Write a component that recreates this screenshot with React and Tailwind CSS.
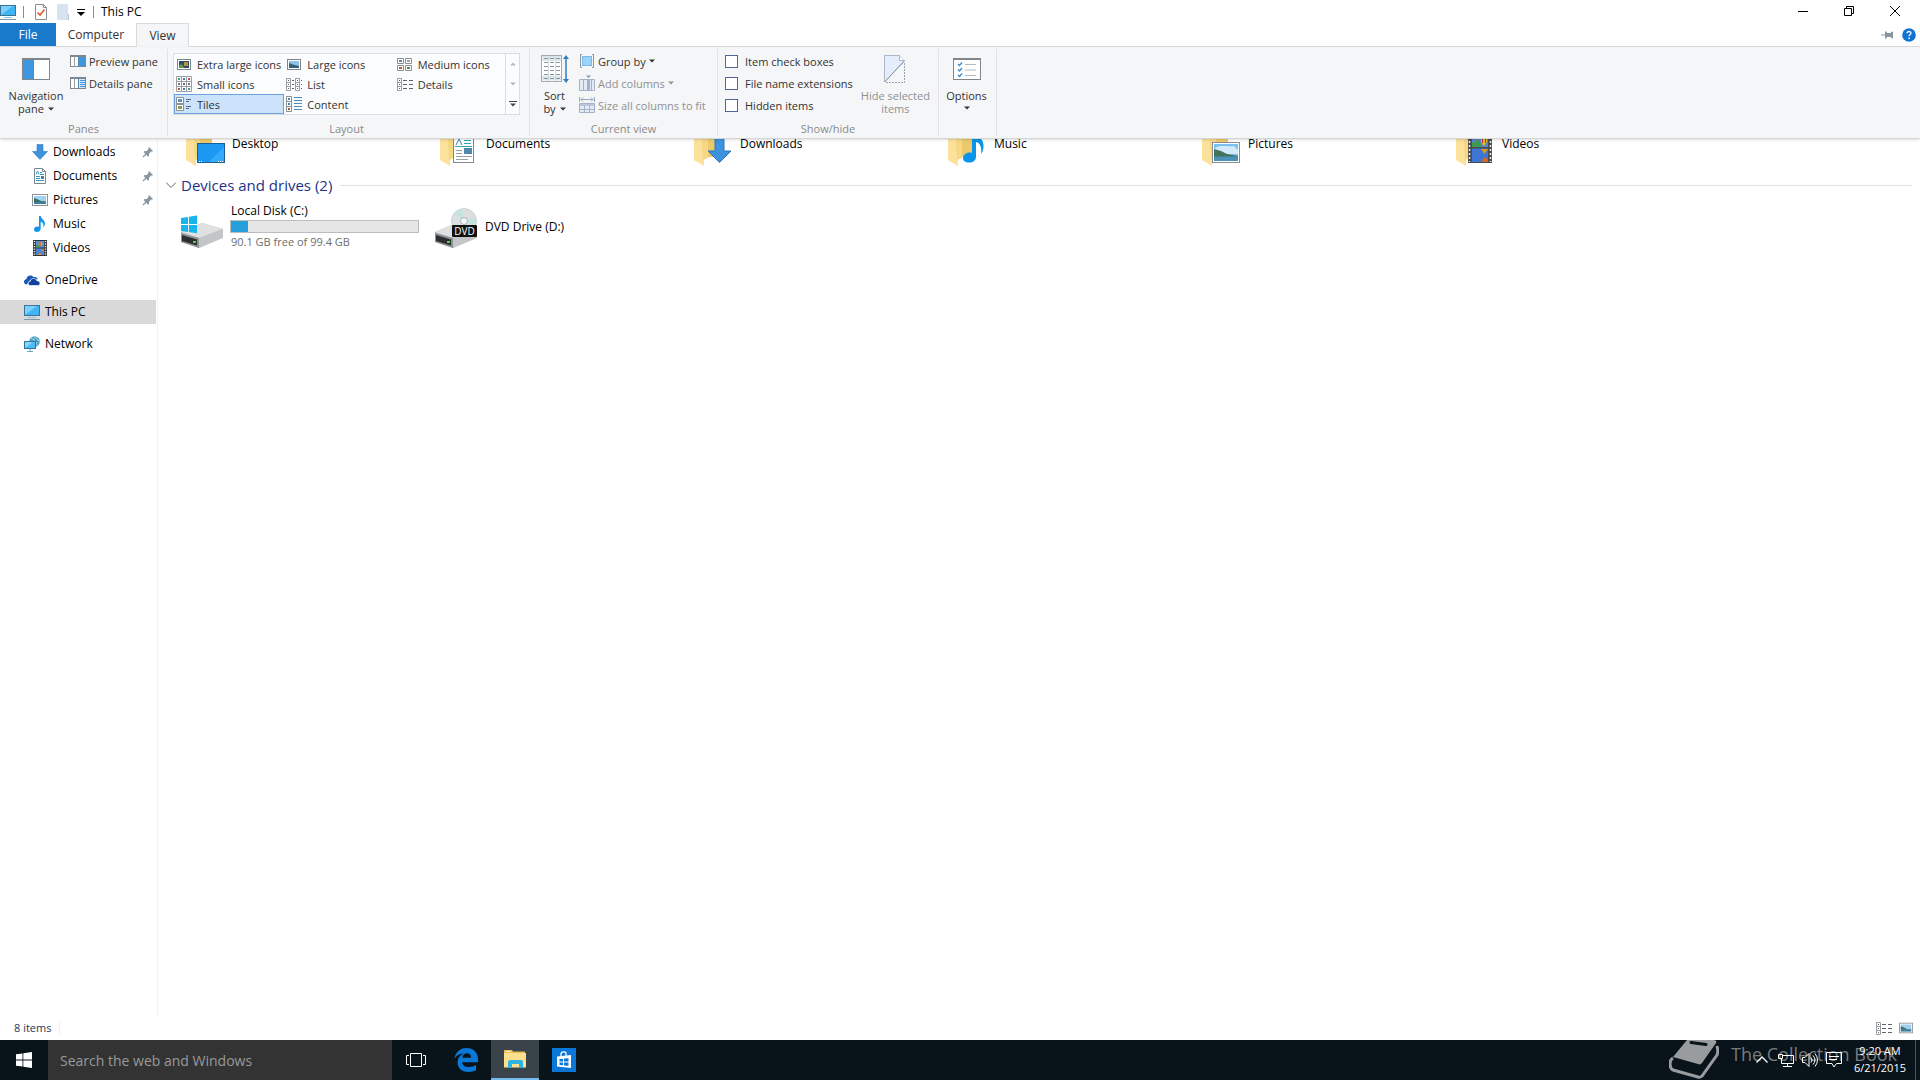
import { useState } from "react";

function Monitor({ className }) {
  return (
    <svg className={className} viewBox="0 0 16 16" aria-hidden="true">
      <rect x="0.5" y="1.5" width="15" height="10" fill="#3fb4f4" stroke="#3b7297" />
      <path d="M1 11V2h12z" fill="#7dd0fb" />
      <path d="M4 13.5h8" stroke="#8fc3df" />
      <path d="M0 15.5h16" stroke="#7c97a8" />
    </svg>
  );
}

function DownArrow({ className }) {
  return (
    <svg className={className} viewBox="0 0 16 16" aria-hidden="true">
      <path d="M5 .5h6v7h4.500L8 15.500.5 7.500H5z" fill="#3f92dd" stroke="#2b76bf" strokeWidth=".6" />
    </svg>
  );
}

function DocIcon({ className }) {
  return (
    <svg className={className} viewBox="0 0 16 16" aria-hidden="true">
      <path d="M2.500.5h8l3 3v12h-11z" fill="#fff" stroke="#7b8791" />
      <path d="M10.500.5v3h3" fill="none" stroke="#7b8791" />
      <path d="M4 6.500l1.500-3.500L7 6.500M8 4.500h2M8 6.500h4M4 8.500h4M4 10.500h4M4 12.500h8" fill="none" stroke="#2f9ac4" />
      <rect x="9" y="8" width="3" height="3" fill="#4b7f97" />
    </svg>
  );
}

function PictureIcon({ className }) {
  return (
    <svg className={className} viewBox="0 0 16 12" aria-hidden="true">
      <rect x="0.5" y="0.5" width="15" height="11" fill="#fff" stroke="#8d9499" />
      <rect x="2" y="2" width="12" height="8" fill="#9fd2f2" />
      <path d="M2 4l3 1 4 2 5 .5V8H2z" fill="#3b6d63" />
      <path d="M2 8h12v2H2z" fill="#3f7fa6" />
    </svg>
  );
}

function NoteIcon({ className }) {
  return (
    <svg className={className} viewBox="0 0 16 16" aria-hidden="true">
      <path d="M7 0h1.700c.4 3 4.600 4 4.300 8-.1 1.500-1 2.500-1.800 3.300.9-3-.2-4.800-2.500-5.500v7c0 1.800-1.500 3.200-3.700 3.200C3.500 16 2 15.200 2 13.500s1.600-3 3.400-3c.6 0 1.100.1 1.600.3z" fill="#1695ec" />
    </svg>
  );
}

function FilmIcon({ className }) {
  return (
    <svg className={className} viewBox="0 0 16 16" aria-hidden="true">
      <rect x="1" y="0" width="14" height="16" fill="#33363b" />
      <path d="M2.500 1v14M13.500 1v14" stroke="#e8e8e8" strokeWidth="1.500" strokeDasharray="1.300 1.200" />
      <rect x="4" y="1" width="8" height="6.500" fill="#5b8fcb" />
      <rect x="4" y="8.500" width="8" height="6.500" fill="#4b86d8" />
      <path d="M4 5l3 0 1 2.500H4z" fill="#3f9a52" />
      <circle cx="8.500" cy="4" r="2" fill="#e0b23a" />
      <path d="M8 2v4" stroke="#c9304e" />
      <path d="M9 9.500h3v1.500H9zM6 13.500h4V15H6z" fill="#d98b2f" />
    </svg>
  );
}

function CloudIcon({ className }) {
  return (
    <svg className={className} viewBox="0 0 16 16" aria-hidden="true">
      <path d="M3 12.500C1 12.500 0 11.200 0 9.800 0 8.300 1 7.300 2.300 7.200 2.600 5 4.200 3.500 6.300 3.500c1.500 0 2.600.6 3.400 1.700 1.700-.5 3.500.4 4 2.200l-4-.2-4 1.300-1.700 2z" fill="#1a56b4" />
      <path d="M6.500 13.500c-1.300 0-2.300-.9-2.300-2.100s.9-2 2-2.100C6.500 7.400 8 6.400 9.600 6.400c1.500 0 2.700.9 3.200 2.300 1.900-.1 3.200 1 3.200 2.500 0 1.400-1 2.300-2.400 2.300z" fill="#0d419b" stroke="#fff" strokeWidth=".7" />
    </svg>
  );
}

function NetworkIcon({ className }) {
  return (
    <svg className={className} viewBox="0 0 16 16" aria-hidden="true">
      <circle cx="10.500" cy="5.500" r="5.300" fill="#4a9fc5" />
      <path d="M7 2.500c2 0 2 2 4 1.500M10 .5c1 2 4 2 5 5M12 6c0 2 1 3 2 3" stroke="#b5e0ef" fill="none" />
      <rect x="0.5" y="5.500" width="11" height="7" fill="#4cbcf4" stroke="#2e739c" />
      <path d="M1 12V6h8z" fill="#86d6fb" />
      <path d="M3 15.500h6M6 13v2" stroke="#6fa8c6" />
    </svg>
  );
}

function PinIcon() {
  return (
    <svg className="h-3 w-3" viewBox="0 0 12 12" aria-hidden="true">
      <path d="M7 1l4 4-1 .8-1-.2L7 8l0 2-1 .7L1.600 6 2.500 5l2 .2L6.500 3l-.2-1.200z" fill="#8b959e" />
      <path d="M4 8l-3 3" stroke="#8b959e" strokeWidth="1.200" />
    </svg>
  );
}

function Caret({ className }) {
  return (
    <svg className={className} viewBox="0 0 6 4" aria-hidden="true">
      <path d="M0 .5h6L3 3.500z" fill="currentColor" />
    </svg>
  );
}

function LayoutIcon({ kind }) {
  const cls = "h-4 w-4 shrink-0";
  if (kind === "xl" || kind === "lg") {
    return (
      <svg className={cls} viewBox="0 0 16 16" aria-hidden="true">
        <rect x="1.500" y="3.500" width="13" height="10" fill="#fff" stroke="#7c858c" />
        <rect x="3" y="5" width="10" height="7" fill={kind === "xl" ? "#33496a" : "#8fc3e2"} />
        {kind === "xl" ? (
          <>
            <path d="M3 10c2-3 4-2 5 2H3z" fill="#63934f" />
            <rect x="8" y="6" width="4" height="4" fill="#b2963a" />
          </>
        ) : (
          <path d="M3 7l4 1.500 6 1.500v2H3z" fill="#33647a" />
        )}
      </svg>
    );
  }
  if (kind === "md") {
    return (
      <svg className={cls} viewBox="0 0 16 16" aria-hidden="true">
        <path d="M.5 2.500h6v5h-6zM8.500 2.500h6v5h-6zM.5 9.500h6v5h-6zM8.500 9.500h6v5h-6z" fill="#fff" stroke="#8b8f93" />
        <path d="M2 4h3v2H2z" fill="#5b8fb0" />
        <path d="M10 4h3v2h-3z" fill="#8fa9b8" />
        <path d="M2 11h3v2H2z" fill="#bb5a3a" />
        <path d="M10 11h3v2h-3z" fill="#6f7d3f" />
      </svg>
    );
  }
  if (kind === "sm") {
    return (
      <svg className={cls} viewBox="0 0 16 16" aria-hidden="true">
        <path d="M.5.5h15v15H.5zM5.500.5v15M10.500.5v15M.5 5.500h15M.5 10.500h15" fill="#fff" stroke="#9b9ea1" />
        <path d="M2 2h2v2H2zM12 12h2v2h-2z" fill="#45a06c" />
        <path d="M7 2h2v2H7zM7 12h2v2H7z" fill="#4476c4" />
        <path d="M12 2h2v2h-2zM2 12h2v2H2z" fill="#b5523e" />
        <path d="M2 7h2v2H2zM7 7h2v2H7zM12 7h2v2h-2z" fill="#6d7176" />
      </svg>
    );
  }
  if (kind === "list") {
    return (
      <svg className={cls} viewBox="0 0 16 16" aria-hidden="true">
        <path d="M.5 2.500h4v12h-4zM9.500 2.500h4v12h-4zM.5 6.500h4M.5 10.500h4M9.500 6.500h4M9.500 10.500h4" fill="#fff" stroke="#9b9ea1" />
        <path d="M2 4.500h1M2 8.500h1M2 12.500h1M11 4.500h1M11 8.500h1M11 12.500h1M6 4.500h2M6 8.500h2M6 12.500h2M15 4.500h1M15 8.500h1M15 12.500h1" stroke="#5d6369" />
      </svg>
    );
  }
  if (kind === "details") {
    return (
      <svg className={cls} viewBox="0 0 16 16" aria-hidden="true">
        <path d="M.5 2.500h4v12h-4zM.5 6.500h4M.5 10.500h4" fill="#fff" stroke="#9b9ea1" />
        <path d="M2 4.500h1M2 8.500h1M2 12.500h1M6 4.500h4M6 8.500h4M6 12.500h4M12 4.500h4M12 8.500h4M12 12.500h4" stroke="#5d6369" />
      </svg>
    );
  }
  if (kind === "tiles") {
    return (
      <svg className={cls} viewBox="0 0 16 16" aria-hidden="true">
        <path d="M.5 1.500h7v6h-7zM.5 8.500h7v6h-7z" fill="#fff" stroke="#8b8f93" />
        <path d="M2 3h4v3H2z" fill="#5d92ba" />
        <path d="M2 10h4v3H2z" fill="#87a04d" />
        <path d="M10 3.500h5M10 5.500h3M10 10.500h5M10 12.500h3" stroke="#5d6a86" />
      </svg>
    );
  }
  return (
    <svg className={cls} viewBox="0 0 16 16" aria-hidden="true">
      <path d="M.5.5h5v15h-5zM.5 5.500h5M.5 10.500h5" fill="#fff" stroke="#8b8f93" />
      <path d="M2 2h2v2H2zM2 7h2v2H2z" fill="#4a83a8" />
      <path d="M2 12h2v2H2z" fill="#a85a45" />
      <path d="M8 1.500h8M8 4.500h8M8 7.500h8M8 10.500h8M8 13.500h8" stroke="#4c87bd" />
    </svg>
  );
}

function PaneIcon({ details }) {
  return (
    <svg className="h-3 w-4" viewBox="0 0 16 12" aria-hidden="true">
      <rect x="0.500" y="0.500" width="15" height="11" fill="#fff" stroke="#7f868c" />
      <path d="M0 1h16" stroke="#7f868c" strokeWidth="2" />
      <path d="M4.500 1v11" stroke="#9aa0a5" />
      <rect x="9" y="2" width="6" height="9" fill={details ? "#d5eafa" : "#3f97df"} />
      <path d="M8.500 1v11" stroke="#5a87ac" />
      {details && <path d="M10 3.500h5M10 5.500h5M10 7.500h5M10 9.500h5" stroke="#3f97df" />}
    </svg>
  );
}

/* ---------- folder tiles ---------- */

function FolderIcon({ kind }) {
  return (
    <svg className="h-12 w-12 shrink-0" viewBox="0 0 48 48" aria-hidden="true">
      <path d="M8 4h20v34H8z" fill="#ecc96b" />
      <path d="M2 2h6l8 5v30l-4 3v7L2 41z" fill="#fbe19a" />
      <path d="M9 8l7-2v33l-5 2z" fill="#f6d784" />
      {kind === "desktop" && (
        <>
          <rect x="13.500" y="24.500" width="27" height="19" fill="#1c98f3" stroke="#1d5f95" />
          <path d="M25 43L40 28v15z" fill="#35a9fa" />
          <path d="M15 42.500h3M34 42.500h5" stroke="#fff" strokeDasharray="1 1" />
        </>
      )}
      {kind === "documents" && (
        <>
          <rect x="15.500" y="14.500" width="20" height="29" fill="#fff" stroke="#7e8990" />
          <path d="M18 26l3-6 3 6" fill="none" stroke="#2a86b5" />
          <path d="M26 21.500h7M26 24.500h7M17 27.500h17" stroke="#35a2c6" />
          <path d="M18 31.500h6M18 34.500h6M18 37.500h16M18 40.500h12" stroke="#9aa1a6" />
          <rect x="26" y="29" width="8" height="6" fill="#4e88ab" />
        </>
      )}
      {kind === "downloads" && <path d="M23 12h9v20h7L27.500 43.500 16 32h7z" fill="#3f92dd" stroke="#2b76bf" />}
      {kind === "music" && (
        <path d="M26 12h4c1 6 8 7 7.500 16-.2 3-1 5-2.500 7 1-7-1-11-5-12v15c0 3.500-3 5.500-7 5.500-3.500 0-6-1.500-6-4.500s3-5.500 6.500-5.500c1 0 1.800.1 2.500.5z" fill="#0a95ea" />
      )}
      {kind === "pictures" && (
        <>
          <rect x="12.500" y="23.500" width="27" height="20" fill="#fff" stroke="#878f95" />
          <rect x="14" y="25" width="24" height="17" fill="#79bff0" />
          <path d="M17 28c4-2 9 0 17-1l4 4v4H14v-5z" fill="#d3eafa" />
          <path d="M14 30l7 2 6 3 11 2v1H14z" fill="#41745a" />
          <path d="M14 37.500h24V42H14z" fill="#4b91b8" />
        </>
      )}
      {kind === "videos" && (
        <>
          <rect x="14" y="14" width="24" height="30" fill="#4a4d50" />
          <path d="M15.500 14v29M36.500 14v29" stroke="#eceff1" strokeWidth="1.500" strokeDasharray="2 2" />
          <path d="M18 14h16v14H18z" fill="#5b86c5" />
          <path d="M18 24l7-3 3 7H18z" fill="#3f9a4e" />
          <path d="M18 29.500h16V43H18z" fill="#3e74d3" />
          <path d="M27 17h6v6l-3 4-3-4z" fill="#e7bd27" />
          <path d="M28 17h1v7h-1zM31 17h1v7h-1z" fill="#c0283f" />
          <path d="M27 30h7l-3.500 5z" fill="#d69a24" />
          <path d="M28 43c0-6 6-6 6 0z" fill="#cf6a2b" />
          <path d="M19 15l4 0-2 4z" fill="#b33a7c" />
        </>
      )}
    </svg>
  );
}

function DriveBody() {
  return (
    <>
      <path d="M3 29l21-9 21 6v8L21 45 3 39z" fill="#b9bbbd" />
      <path d="M3 29l21-9 21 6-24 9z" fill="#dfe0e1" />
      <path d="M21 35l24-9v9L21 45z" fill="#c3c5c7" />
      <path d="M3 30l18 5v10L3 39z" fill="#8f9193" />
      <path d="M4 32l15 4.500v6L4 38z" fill="#2c2f31" />
      <rect x="15" y="38" width="3" height="2" fill="#4fd05a" />
    </>
  );
}

function LocalDiskIcon() {
  return (
    <svg className="h-12 w-12 shrink-0" viewBox="0 0 48 48" aria-hidden="true">
      <DriveBody />
      <path d="M3 15l7-1v7H3zM11 13.800l8-1.200V21h-8zM3 22h7v7l-7-1zM11 22h8v8.200l-8-1.200z" fill="#16b5ea" />
    </svg>
  );
}

function DvdIcon() {
  return (
    <svg className="h-12 w-12 shrink-0" viewBox="0 0 48 48" aria-hidden="true">
      <DriveBody />
      <circle cx="32" cy="18" r="12.500" fill="#dcdfe0" stroke="#b9bdc0" strokeWidth=".6" />
      <path d="M32 18L22 10.500A12.500 12.500 0 0 1 30 5.700zM32 18l11.500 5A12.500 12.500 0 0 0 44 15z" fill="#c3e3dd" />
      <circle cx="32" cy="18" r="3.500" fill="#f5f6f6" stroke="#afb4b6" />
      <rect x="20" y="22" width="25" height="12" rx="1" fill="#111" />
      <text x="32.500" y="31.500" textAnchor="middle" fontSize="10" fill="#fff" fontFamily="Open Sans, sans-serif">
        DVD
      </text>
    </svg>
  );
}

const folders = [
  { name: "Desktop", kind: "desktop" },
  { name: "Documents", kind: "documents" },
  { name: "Downloads", kind: "downloads" },
  { name: "Music", kind: "music" },
  { name: "Pictures", kind: "pictures" },
  { name: "Videos", kind: "videos" },
];

const quickAccess = [
  { name: "Downloads", Icon: DownArrow, pinned: true },
  { name: "Documents", Icon: DocIcon, pinned: true },
  { name: "Pictures", Icon: PictureIcon, pinned: true },
  { name: "Music", Icon: NoteIcon },
  { name: "Videos", Icon: FilmIcon },
];

const layouts = [
  { name: "Extra large icons", kind: "xl" },
  { name: "Large icons", kind: "lg" },
  { name: "Medium icons", kind: "md" },
  { name: "Small icons", kind: "sm" },
  { name: "List", kind: "list" },
  { name: "Details", kind: "details" },
  { name: "Tiles", kind: "tiles" },
  { name: "Content", kind: "content" },
];

function TitleBar() {
  return (
    <header className="flex h-[23px] shrink-0 items-center bg-white">
      <Monitor className="h-4 w-4" />
      <span className="ml-[7px] h-3 w-px bg-[#8c8c8c]" />
      <button aria-label="Properties" className="ml-[11px]">
        <svg className="h-4 w-3" viewBox="0 0 12 16">
          <path d="M.5.5h8l3 3v12H.5z" fill="#fff" stroke="#8b8f93" />
          <path d="M8.500.5v3h3" fill="none" stroke="#8b8f93" />
          <path d="M2.500 8.500L5 11l4.500-5.500" fill="none" stroke="#e2572b" strokeWidth="1.600" />
        </svg>
      </button>
      <button aria-label="New folder" className="ml-[10px]">
        <svg className="h-4 w-3" viewBox="0 0 12 16">
          <path d="M0 0h11v10l1 1v5H0z" fill="#d8e2f1" />
          <path d="M10 10.500h1.500v5H9.500" fill="none" stroke="#b9c7dc" />
        </svg>
      </button>
      <button aria-label="Customize Quick Access Toolbar" className="ml-2">
        <svg className="h-2 w-2" viewBox="0 0 8 8">
          <path d="M0 1.500h8" stroke="#000" />
          <path d="M0 4h8L4 8z" fill="#000" />
        </svg>
      </button>
      <span className="ml-2 h-3 w-px bg-[#8c8c8c]" />
      <h1 className="ml-[7px] text-xs">This PC</h1>
      <div className="ml-auto flex items-center pr-[2px] pb-[2px]">
        <button aria-label="Minimize" className="flex w-[46px] justify-center">
          <svg className="h-[10px] w-[10px]" viewBox="0 0 10 10">
            <path d="M0 5.500h10" stroke="#000" />
          </svg>
        </button>
        <button aria-label="Restore" className="flex w-[46px] justify-center">
          <svg className="h-[10px] w-[10px]" viewBox="0 0 10 10">
            <path d="M.5 2.500h7v7h-7zM2.500 2V.5h7v7H8" fill="none" stroke="#000" />
          </svg>
        </button>
        <button aria-label="Close" className="flex w-[46px] justify-center">
          <svg className="h-[10px] w-[10px]" viewBox="0 0 10 10">
            <path d="M0 0l10 10M10 0L0 10" stroke="#000" />
          </svg>
        </button>
      </div>
    </header>
  );
}

function Tabs() {
  return (
    <nav className="flex h-6 shrink-0 items-stretch border-b border-[#dadbdc] bg-white text-xs text-[#333]">
      <button className="w-14 bg-[#1979ca] text-white">File</button>
      <button className="w-20">Computer</button>
      <button className="-mb-px w-[53px] border border-b-0 border-[#dadbdc] bg-[#f5f6f7]">View</button>
      <div className="ml-auto flex items-center gap-[9px] pr-1">
        <button aria-label="Minimize the Ribbon">
          <svg className="h-2 w-3" viewBox="0 0 12 8">
            <path d="M0 4h4" stroke="#8b959e" />
            <path d="M4 .5h1.500l.5 1.500h4V.8h2v6.400h-2V6H6l-.5 1.500H4z" fill="#8b959e" />
          </svg>
        </button>
        <button aria-label="Help">
          <svg className="h-[14px] w-[14px]" viewBox="0 0 14 14">
            <circle cx="7" cy="7" r="6.800" fill="#0f74d1" />
            <path d="M5 5.300C5 2.800 9.200 3 9 5.300c-.1 1.300-1.900 1.400-1.900 3" fill="none" stroke="#fff" strokeWidth="1.300" />
            <circle cx="7.100" cy="10.300" r=".9" fill="#fff" />
          </svg>
        </button>
      </div>
    </nav>
  );
}

function Group({ label, className, children }) {
  return (
    <section className={`flex flex-col border-r border-[#e2e3e4] ${className}`}>
      <div className="flex flex-1">{children}</div>
      <h2 className="h-[15px] text-center text-[11px] leading-4 text-[#8a8a8a]">{label}</h2>
    </section>
  );
}

function Ribbon() {
  const [view, setView] = useState("Tiles");
  const [shown, setShown] = useState({});

  return (
    <div className="z-10 flex h-[92px] shrink-0 border-b border-[#d5d6d7] bg-[#f5f6f7] py-[2px] text-[11px] leading-[13px] text-[#333] shadow-sm">
      <Group label="Panes" className="w-[168px]">
        <button className="flex w-[70px] flex-col items-center pt-[9px] pl-[2px]">
          <svg className="h-[22px] w-7" viewBox="0 0 28 22" aria-hidden="true">
            <rect x="0.500" y="0.500" width="27" height="21" fill="#fff" stroke="#7f868c" />
            <path d="M0 1h28" stroke="#7f868c" strokeWidth="2" />
            <rect x="1" y="2" width="10" height="19" fill="#3f97df" />
            <path d="M11.500 2v19" stroke="#5a87ac" />
          </svg>
          <span className="mt-[9px]">Navigation</span>
          <span className="flex items-center gap-1">
            pane <Caret className="h-1 w-[6px]" />
          </span>
        </button>
        <div className="flex flex-col pt-px">
          <button className="flex h-[22px] items-center gap-[3px]">
            <PaneIcon /> Preview pane
          </button>
          <button className="flex h-[22px] items-center gap-[3px]">
            <PaneIcon details /> Details pane
          </button>
        </div>
      </Group>

      <Group label="Layout" className="w-[362px] pr-[9px] pl-[5px]">
        <div className="mt-1 flex h-[62px] flex-1 border border-[#dcdddf] bg-[#fbfcfd]">
          <div className="grid flex-1 grid-cols-3 grid-rows-3">
            {layouts.map((l) => (
              <button
                key={l.name}
                onClick={() => setView(l.name)}
                className={
                  view === l.name
                    ? "flex items-center gap-[5px] border border-[#6ba1d8] bg-[#cce3fc] pl-px whitespace-nowrap"
                    : "flex items-center gap-[5px] pl-[2px] whitespace-nowrap"
                }
              >
                <LayoutIcon kind={l.kind} />
                {l.name}
              </button>
            ))}
          </div>
          <div className="flex w-[14px] flex-col border-l border-[#dcdddf] text-[#b5b8bb]">
            <button aria-label="Scroll up" className="flex flex-1 items-center justify-center">
              <Caret className="h-1 w-[6px] rotate-180" />
            </button>
            <button aria-label="Scroll down" className="flex flex-1 items-center justify-center">
              <Caret className="h-1 w-[6px]" />
            </button>
            <button aria-label="More layouts" className="flex flex-1 flex-col items-center justify-center gap-px text-[#444]">
              <span className="h-px w-2 bg-[#444]" />
              <Caret className="h-1 w-2" />
            </button>
          </div>
        </div>
      </Group>

      <Group label="Current view" className="w-[188px]">
        <button className="flex w-[49px] flex-col items-center pt-[6px]">
          <svg className="h-7 w-7" viewBox="0 0 28 28" aria-hidden="true">
            <rect x="0.500" y="0.500" width="20" height="26" fill="#fff" stroke="#a7abad" />
            <path d="M1 3.500h19M1 23h19" stroke="#dbe6ec" strokeWidth="5" />
            <path d="M3 3.500h16M3 7.500h16M3 11.500h16M3 15.500h16M3 19.500h16M3 23.500h16" stroke="#8c979d" strokeDasharray="4 2" />
            <path d="M7.500 1v25M14.500 1v25" stroke="#d8dcde" />
            <path d="M25 3v22" stroke="#2f7fc2" strokeWidth="1.500" />
            <path d="M22 4l3-4 3 4zM22 24l3 4 3-4z" fill="#2f7fc2" />
          </svg>
          <span className="mt-[6px]">Sort</span>
          <span className="flex items-center gap-1">
            by <Caret className="h-1 w-[6px]" />
          </span>
        </button>
        <div className="flex flex-col pt-px whitespace-nowrap">
          <button className="flex h-[22px] items-center gap-[3px]">
            <svg className="h-4 w-4" viewBox="0 0 16 16" aria-hidden="true">
              <path d="M3 1.500H1.500v13H3M13 1.500h1.500v13H13" fill="none" stroke="#8b959e" />
              <rect x="3.500" y="3.500" width="9" height="9" fill="#9bd5fa" stroke="#79b9e3" />
            </svg>
            Group by <Caret className="h-1 w-[6px]" />
          </button>
          <button disabled className="flex h-[22px] items-center gap-[3px] text-[#8f9193]">
            <svg className="h-4 w-4" viewBox="0 0 16 16" aria-hidden="true">
              <path d="M.5 4.500h15v11H.5z" fill="#e4ebf5" stroke="#a3b1c9" />
              <path d="M4.500 4v11M12.500 4v11" stroke="#a3b1c9" />
              <path d="M8 4h3v11H8z" fill="#a3b1c9" />
              <path d="M7 .5h5L9.500 3z" fill="#8796b4" />
            </svg>
            Add columns <Caret className="h-1 w-[6px]" />
          </button>
          <button disabled className="flex h-[22px] items-center gap-[3px] text-[#8f9193]">
            <svg className="h-4 w-4" viewBox="0 0 16 16" aria-hidden="true">
              <path d="M.5 0v5M15.500 0v5M2 2.500h12M4 .5l-2 2 2 2M12 .5l2 2-2 2" fill="none" stroke="#9aa7bd" />
              <path d="M.5 6.500h15v9H.5z" fill="#e4ebf5" stroke="#a3b1c9" />
              <path d="M1 8h14" stroke="#b9c7dd" strokeWidth="2" />
              <path d="M5.500 9v6M10.500 9v6M1 12.500h14" stroke="#a3b1c9" />
            </svg>
            Size all columns to fit
          </button>
        </div>
      </Group>

      <Group label="Show/hide" className="w-[221px]">
        <div className="flex flex-col pt-px pl-[7px] whitespace-nowrap">
          {["Item check boxes", "File name extensions", "Hidden items"].map((name) => (
            <label key={name} className="flex h-[22px] items-center gap-[7px]">
              <input
                type="checkbox"
                checked={!!shown[name]}
                onChange={(e) => setShown({ ...shown, [name]: e.target.checked })}
                className="h-[13px] w-[13px] appearance-none border border-[#4f6699] bg-white checked:bg-[#4f6699]"
              />
              {name}
            </label>
          ))}
        </div>
        <button disabled className="ml-auto flex w-[87px] flex-col items-center pt-[6px] text-[#8f9193]">
          <svg className="h-7 w-[22px]" viewBox="0 0 22 28" aria-hidden="true">
            <path d="M.5 27V.5h15l5 5z" fill="#e4edf9" stroke="#aab6c9" />
            <path d="M15.500.5v5h5" fill="#fff" stroke="#aab6c9" />
            <path d="M20.500 6L.5 27" stroke="#8a97ab" />
            <path d="M20.500 8v19.500H1" fill="none" stroke="#9aa4b2" strokeDasharray="2 1" />
          </svg>
          <span className="mt-[6px] whitespace-nowrap">Hide selected</span>
          <span>items</span>
        </button>
      </Group>

      <Group label="" className="w-[58px]">
        <button className="flex w-[55px] flex-col items-center pt-[9px]">
          <svg className="h-[22px] w-7" viewBox="0 0 28 22" aria-hidden="true">
            <rect x="0.500" y="0.500" width="27" height="21" fill="#fff" stroke="#7f868c" />
            <path d="M0 1h28" stroke="#7f868c" strokeWidth="2" />
            <path d="M5 6l1.500 1.500L9 4.500M5 11.500L6.500 13 9 10M5 17l1.500 1.500L9 15.500" fill="none" stroke="#3f8fd2" strokeWidth="1.500" />
            <path d="M12 6.500h11M12 12h11M12 17.500h11" stroke="#b4b8bb" />
          </svg>
          <span className="mt-[9px]">Options</span>
          <Caret className="mt-1 h-1 w-[6px]" />
        </button>
      </Group>
    </div>
  );
}

function Sidebar() {
  return (
    <aside className="w-[158px] shrink-0 border-r border-[#f2f2f2] pr-px text-xs">
      <ul className="pt-px">
        {quickAccess.map(({ name, Icon, pinned }) => (
          <li key={name}>
            <a href="#" className="flex h-6 items-center pr-[2px] pl-8">
              <Icon className="mr-[5px] h-4 w-4" />
              {name}
              {pinned && (
                <span className="ml-auto">
                  <PinIcon />
                </span>
              )}
            </a>
          </li>
        ))}
      </ul>
      <ul className="mt-2 flex flex-col gap-2">
        <li>
          <a href="#" className="flex h-6 items-center gap-[5px] pl-6">
            <CloudIcon className="h-4 w-4" /> OneDrive
          </a>
        </li>
        <li>
          <a href="#" className="flex h-6 items-center gap-[5px] bg-[#d9d9d9] pl-6">
            <Monitor className="h-4 w-4" /> This PC
          </a>
        </li>
        <li>
          <a href="#" className="flex h-6 items-center gap-[5px] pl-6">
            <NetworkIcon className="h-4 w-4" /> Network
          </a>
        </li>
      </ul>
    </aside>
  );
}

function Content() {
  const used = 99.4 - 90.1;

  return (
    <main className="min-w-0 flex-1 overflow-hidden text-xs">
      <div className="-mt-5 flex flex-wrap pl-[26px]">
        {folders.map((f) => (
          <a href="#" key={f.name} className="flex w-[254px] items-center leading-4">
            <FolderIcon kind={f.kind} />
            <span className="pt-[2px]">{f.name}</span>
          </a>
        ))}
      </div>
      <div className="mt-2 flex items-center pr-2 pl-2">
        <button aria-label="Collapse group">
          <svg className="h-[6px] w-[10px]" viewBox="0 0 10 6">
            <path d="M0 .5l5 5 5-5" fill="none" stroke="#666" />
          </svg>
        </button>
        <h2 className="ml-[5px] text-[15px] leading-5 text-[#1e3287]">Devices and drives (2)</h2>
        <span className="ml-2 h-px flex-1 bg-[#e2e2e2]" />
      </div>
      <div className="mt-2 flex flex-wrap pl-5">
        <a href="#" className="flex w-[254px] gap-1">
          <LocalDiskIcon />
          <div className="w-[189px]">
            <p className="pl-px leading-4">Local Disk (C:)</p>
            <div className="mt-px h-[13px] border border-[#bcbcbc] bg-[#e6e6e6]">
              <div className="h-full bg-[#26a0da]" style={{ width: `${(used / 99.4) * 100}%` }} />
            </div>
            <p className="pl-px text-[11px] leading-[18px] text-[#6d6d6d]">90.1 GB free of 99.4 GB</p>
          </div>
        </a>
        <a href="#" className="flex w-[254px] items-center gap-[5px]">
          <DvdIcon />
          DVD Drive (D:)
        </a>
      </div>
    </main>
  );
}

function StatusBar() {
  return (
    <footer className="flex h-6 shrink-0 items-center pr-[7px] pl-[14px] text-[11px] text-[#1e395b]">
      <span className="border-r border-[#f0f0f0] pr-2">8 items</span>
      <div className="ml-auto flex items-center gap-[7px]">
        <button aria-label="Details view">
          <LayoutIcon kind="details" />
        </button>
        <button aria-label="Large icons view">
          <PictureIcon className="h-3 w-[14px]" />
        </button>
      </div>
    </footer>
  );
}

function Taskbar() {
  return (
    <div className="relative flex h-10 shrink-0 items-stretch bg-[#09131a] text-white">
      <button aria-label="Start" className="flex w-12 items-center justify-center">
        <svg className="h-4 w-4" viewBox="0 0 16 16">
          <path d="M0 2.300l6.500-.9v6.200H0zM7.300 1.300L16 0v7.600H7.300zM0 8.400h6.500v6.200L0 13.700zM7.300 8.400H16V16l-8.700-1.300z" fill="#fff" />
        </svg>
      </button>
      <input
        aria-label="Search the web and Windows"
        placeholder="Search the web and Windows"
        className="w-[344px] bg-[#333] px-3 pt-px text-sm text-white outline-none placeholder:text-[#999]"
      />
      <button aria-label="Task View" className="flex w-12 items-center justify-center">
        <svg className="h-4 w-5" viewBox="0 0 20 16">
          <path d="M4.500 1.500h11v13h-11zM3 3.500H.5v9H3M17 3.500h2.500v9H17" fill="none" stroke="#fff" />
        </svg>
      </button>
      <button aria-label="Microsoft Edge" className="flex w-[51px] items-center justify-center">
        <svg className="h-6 w-6" viewBox="0 0 24 24">
          <path d="M.5 10.700C1.300 4.300 6 0 12.500 0 19.500 0 24 4.800 24 11.200v3H8.200c.2 3.400 3 4.900 6.800 4.900 2.700 0 5-.7 7-2v5.200c-2.300 1.200-4.900 1.700-7.700 1.700C7.600 24 3.600 20.300 3.600 14.600c0-4.200 2.400-7.400 6-9C5.600 5.200 2.200 7.600.5 10.700zM8.400 9.700h8.700c0-3-1.500-4.500-4.100-4.500-2.500 0-4.200 1.700-4.600 4.500z" fill="#0a78d6" />
        </svg>
      </button>
      <button aria-label="File Explorer" className="flex w-12 items-center justify-center border-b-2 border-[#76b9ed] bg-[#3a4349]">
        <svg className="h-[18px] w-[22px]" viewBox="0 0 22 18">
          <path d="M0 0h8l1 1.500h12V4H0z" fill="#e9bf55" />
          <path d="M2 1h5v1H2z" fill="#fff3cf" />
          <path d="M0 3h22v14.500H0z" fill="#fbe08e" />
          <path d="M4 18v-6.500L5.500 10h12l1.500 1.500V18h-4v-4H8v4z" fill="#2fb2e4" />
        </svg>
      </button>
      <button aria-label="Store" className="flex w-[50px] items-center justify-center">
        <svg className="h-6 w-6" viewBox="0 0 24 24">
          <rect width="24" height="24" fill="#0b78d7" />
          <path d="M5 8.500L19 7v13L5 18.500z" fill="#fff" />
          <path d="M9 8V6c0-2.500 5-3 5-.5V8" fill="none" stroke="#fff" strokeWidth="1.300" />
          <path d="M7.500 11l3.500-.3v2.800H7.500zM12 10.600l4.500-.4v3.300H12zM7.500 14.500H11v2.800l-3.500-.3zM12 14.500h4.500v3.300l-4.500-.4z" fill="#0b78d7" />
        </svg>
      </button>

      <div className="absolute inset-y-0 right-[23px] flex items-start gap-3 text-lg text-[#777b7e]">
        <svg className="h-10 w-[50px]" viewBox="0 0 50 40" aria-hidden="true">
          <path d="M18 0h26c3 0 4 1 3 3L33 23c-1 1-2 2-4 1L4 17z" fill="#999c9e" />
          <path d="M4 18c-4 2-4 10 0 12l25 7c2 1 3 0 4-1l15-21c1-2 1-5 0-9" fill="none" stroke="#999c9e" strokeWidth="3" />
          <path d="M22 2.500l15 2" stroke="#09131a" strokeWidth="3" strokeLinecap="round" />
        </svg>
        <span>The Collection Book</span>
      </div>

      <div className="relative ml-auto flex items-center">
        <button aria-label="Show hidden icons" className="mr-2">
          <svg className="h-4 w-4" viewBox="0 0 16 16">
            <path d="M2.500 10.500L8 5l5.500 5.500" fill="none" stroke="#fff" strokeWidth="1.300" />
          </svg>
        </button>
        <button aria-label="Network status" className="mr-2">
          <svg className="h-4 w-4" viewBox="0 0 16 16">
            <path d="M5 3.500h10.500v8H3.500V7M9.500 12v3M5 14.500h9" fill="none" stroke="#fff" />
            <path d="M.5 2.500h4v4h-4z" fill="none" stroke="#fff" />
          </svg>
        </button>
        <button aria-label="Volume" className="mr-2">
          <svg className="h-4 w-4" viewBox="0 0 16 16">
            <path d="M.5 5.500H3l4-4v13l-4-4H.5z" fill="none" stroke="#fff" />
            <path d="M9 5.500q2 2.500 0 5M11 3.500q4 4.500 0 9M13 1.500q5 6.500 0 13" fill="none" stroke="#fff" />
          </svg>
        </button>
        <button aria-label="Notifications" className="mr-3">
          <svg className="h-4 w-4" viewBox="0 0 16 16">
            <path d="M.5.500h15v11h-5L8 15l-2-3.500H.5z" fill="none" stroke="#fff" />
            <path d="M3 4.500h10M3 7.500h8" stroke="#fff" />
          </svg>
        </button>
        <p className="pb-[2px] text-center text-[11px] leading-[17px]">
          9:20 AM
          <br />
          6/21/2015
        </p>
        <span className="ml-[9px] h-10 w-px bg-[#4d545a]" />
        <span className="w-1" />
      </div>
    </div>
  );
}

export default function App() {
  return (
    <div className="flex h-screen flex-col overflow-hidden bg-white font-['Open_Sans','Noto_Sans',sans-serif] text-black">
      <TitleBar />
      <Tabs />
      <Ribbon />
      <div className="flex min-h-0 flex-1">
        <Sidebar />
        <Content />
      </div>
      <StatusBar />
      <Taskbar />
    </div>
  );
}
